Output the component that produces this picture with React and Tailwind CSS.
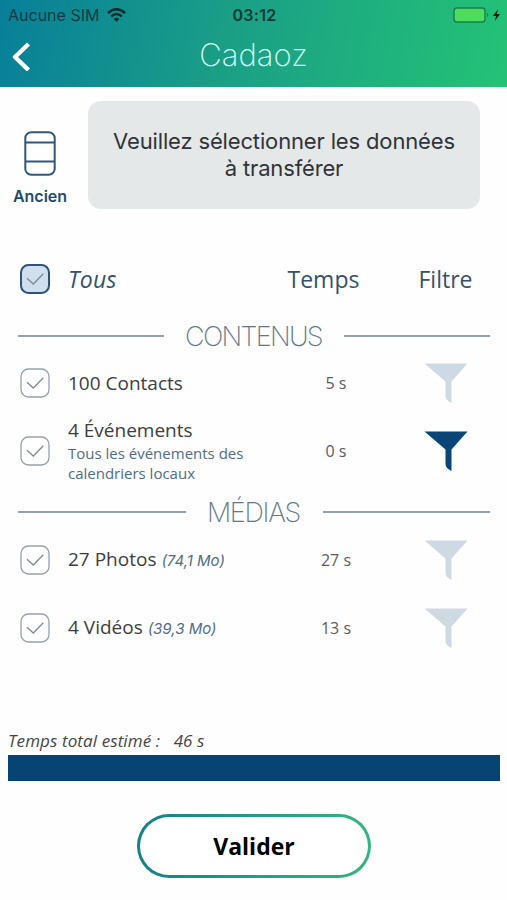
import React from "react";

function CheckBox({ active }) {
  return (
    <svg className="block h-[30px] w-[30px] shrink-0" viewBox="0 0 30 30" fill="none">
      <rect
        x="1" y="1" width="28" height="28" rx="7.5"
        fill={active ? "#cfdfed" : "#ffffff"}
        stroke={active ? "#2d5478" : "#94a2af"}
        strokeWidth={active ? 2 : 1.3}
      />
      <path d="M7 14.2 L13.3 20 L23.3 9.8" stroke="#7c8b94" strokeWidth="1.3" />
    </svg>
  );
}

function Funnel({ active }) {
  return (
    <svg className="block h-[41px] w-[44px]" viewBox="0 0 44 41">
      <path d="M0.5 0.5 H43.5 L27.5 18.5 V40 Q21.5 37 21.5 33 V18.5 Z" fill={active ? "#0a4576" : "#cdd9e3"} />
    </svg>
  );
}

function Section({ title, width, height, tracking }) {
  return (
    <div className={`${height} flex shrink-0 items-center pl-[18px] pr-[17px]`}>
      <div className="h-[2px] flex-1 bg-[#94a2aa]" />
      <div className={`${width} ${tracking} pr-px pt-[2px] text-center font-['Inter'] text-[27px] font-extralight leading-[33px] text-[#64788a]`}>
        {title}
      </div>
      <div className="h-[2px] flex-1 bg-[#94a2aa]" />
    </div>
  );
}

function Row({ height, label, time, active }) {
  return (
    <div className={`${height} flex shrink-0 items-center pl-5`}>
      <CheckBox />
      <div className="w-[220px] pl-[18px] text-[19px] leading-[26px] text-[#3d3d40]">{label}</div>
      <div className="w-[132px] text-center text-[16px] text-[#5c5c60]">{time}</div>
      <div className="ml-[22px] pt-px">
        <Funnel active={active} />
      </div>
    </div>
  );
}

function Size({ children }) {
  return <i className="font-['Inter'] text-[15px] text-[#4f6d88]">{children}</i>;
}

export default function App() {
  return (
    <div className="flex h-[900px] w-[507px] flex-col overflow-hidden bg-[#fefefe] font-['Open_Sans','Noto_Sans',sans-serif]">
      <header className="h-[87px] shrink-0 bg-[linear-gradient(100deg,#087f99_0%,#1a9f86_45%,#24c276_100%)]">
        <div className="grid h-[29px] grid-cols-3 items-center pl-[8px] pr-[6px] font-['Inter'] text-[16px] text-[#0c3d43]">
          <div className="flex items-center gap-[8px]">
            <span className="whitespace-nowrap">Aucune SIM</span>
            <svg className="h-[14px] w-[19px] shrink-0" viewBox="0 0 19 14" fill="none" stroke="#08292e" strokeWidth="2.4">
              <path d="M1 5 Q9.5 -2.4 18 5" />
              <path d="M4.2 8.3 Q9.5 3.8 14.8 8.3" />
              <path d="M9.5 13.8 L6.7 10.9 Q9.5 8.7 12.3 10.9 Z" fill="#08292e" stroke="none" />
            </svg>
          </div>
          <div className="text-center font-semibold tracking-[0.3px] text-[#0b3a38]">03:12</div>
          <div className="flex items-center justify-end">
            <svg className="h-[16px] w-[48px]" viewBox="0 0 48 16">
              <rect x="1" y="1" width="31" height="14" rx="3" fill="#4edc5c" stroke="#14804f" strokeWidth="1.4" />
              <path d="M34 5.5 Q36.5 8 34 10.5 Z" fill="#14804f" />
              <path d="M45.3 2 L39.8 9 H43.2 L41.8 14 L47 7 H43.7 Z" fill="#06251a" />
            </svg>
          </div>
        </div>
        <div className="grid h-[54px] grid-cols-[60px_1fr_60px] items-center">
          <svg className="ml-[12px] h-[30px] w-[19px]" viewBox="0 0 19 30" fill="none" stroke="#fff" strokeWidth="4.4" strokeLinejoin="round">
            <path d="M16.5 3 L3 16 L16.5 29" />
          </svg>
          <h1 className="pb-[3px] text-center font-['Inter'] text-[31px] font-extralight leading-[40px] text-[#d5fff3]">Cadaoz</h1>
        </div>
      </header>

      <div className="flex h-[158px] shrink-0">
        <div className="flex w-[80px] flex-col items-center pt-[44px]">
          <svg className="h-[45px] w-[32px]" viewBox="0 0 32 45" fill="none" stroke="#2f587c" strokeWidth="2">
            <rect x="1.3" y="1.3" width="29.4" height="42.4" rx="6" />
            <path d="M1 11.5 H31 M1 30.5 H31" />
          </svg>
          <span className="mt-[9px] font-['Inter'] text-[16px] font-semibold leading-[22px] text-[#1f4b73]">Ancien</span>
        </div>
        <div className="ml-[8px] mt-[14px] flex h-[108px] w-[392px] items-center justify-center rounded-[13px] bg-[#e4e8e9] text-center font-['Inter'] text-[22px] leading-[27px] tracking-[-0.15px] text-[#303338]">
          <p className="whitespace-nowrap">
            Veuillez sélectionner les données
            <br />à transférer
          </p>
        </div>
      </div>

      <div className="flex h-[68px] shrink-0 items-center pl-5 text-[23px] text-[#33526f]">
        <CheckBox active />
        <div className="w-[206px] pl-[18px] italic tracking-[0.3px]">Tous</div>
        <div className="w-[135px] text-center">Temps</div>
        <div className="w-[109px] text-center">Filtre</div>
      </div>

      <Section title="CONTENUS" width="w-[180px]" height="h-[45px]" tracking="tracking-[-1.7px]" />
      <Row height="h-[50px]" label="100 Contacts" time="5 s" />
      <Row
        height="h-[86px]"
        label={
          <>
            4 Événements
            <div className="whitespace-nowrap pb-[2px] text-[15px] leading-[20px] text-[#4f6d88]">
              Tous les événements des
              <br />
              calendriers locaux
            </div>
          </>
        }
        time="0 s"
        active
      />
      <Section title="MÉDIAS" width="w-[137px]" height="h-[35px]" tracking="tracking-[-1.3px]" />
      <Row height="h-[62px]" label={<>27 Photos <Size>(74,1 Mo)</Size></>} time="27 s" />
      <Row height="h-[73px]" label={<>4 Vidéos <Size>(39,3 Mo)</Size></>} time="13 s" />

      <div className="mt-auto px-2">
        <p className="whitespace-pre text-[17px] italic leading-[28px] tracking-[0.1px] text-[#454548]">Temps total estimé :   46 s</p>
        <div className="h-[26px] w-[492px] bg-[#084473]" />
      </div>
      <div className="mb-[22px] ml-[137px] mt-[33px] h-[64px] w-[234px] shrink-0 rounded-full bg-[linear-gradient(90deg,#15808c,#35b580)] p-[3px]">
        <button className="h-full w-full rounded-full bg-white text-[23px] font-bold text-black">Valider</button>
      </div>
    </div>
  );
}
